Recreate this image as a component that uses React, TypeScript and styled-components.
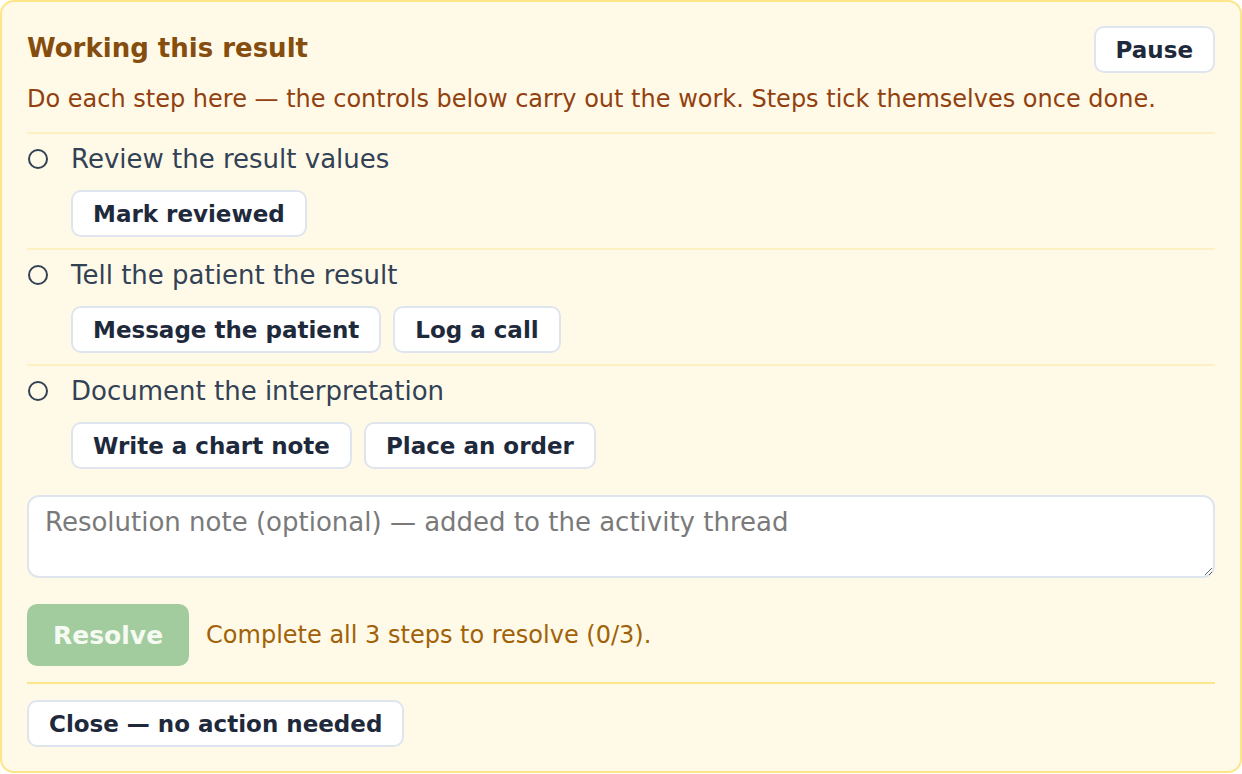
import { memo, useState } from 'react';
import styled, { createGlobalStyle } from 'styled-components';

const GlobalStyle = createGlobalStyle`
  body {
    margin: 0;
    background: #ffffff;
    font-family: 'DejaVu Sans', 'Liberation Sans', sans-serif;
  }
  * {
    box-sizing: border-box;
  }
`;

const SPanel = styled.section`
  background: #fffae8;
  border: 2px solid #fde68a;
  border-radius: 14px;
  padding: 22px 25px 24px;
  display: flex;
  flex-direction: column;
`;

const SHeader = styled.header`
  display: flex;
  justify-content: space-between;
  align-items: flex-start;
  margin-top: 2px;
`;

const STitle = styled.h2`
  margin: 5px 0 0;
  font-size: 26px;
  line-height: 34px;
  font-weight: 700;
  color: #854d0e;
`;

const SHint = styled.p`
  margin: 9px 0 16px;
  font-size: 24px;
  line-height: 34px;
  color: #92400e;
`;

const SButton = styled.button`
  height: 47px;
  padding: 0 20px;
  border: 2px solid #dfe5ef;
  border-radius: 10px;
  background: #ffffff;
  color: #1e293b;
  font-family: inherit;
  font-size: 23px;
  line-height: 28px;
  font-weight: 700;
  cursor: pointer;
`;

const SStepList = styled.ol`
  list-style: none;
  margin: 0;
  padding: 0;
`;

const SStep = styled.li`
  border-top: 2px solid #fdf1c4;
  padding: 8px 0 11px;
`;

const SStepLabel = styled.div`
  display: flex;
  align-items: center;
  gap: 23px;
  font-size: 26px;
  line-height: 34px;
  color: #334155;
`;

const SRadio = styled.span<{ $done: boolean }>`
  width: 20px;
  height: 20px;
  margin-left: 1px;
  border: 2px solid #334155;
  border-radius: 50%;
  background: ${({ $done }) => ($done ? '#334155' : 'transparent')};
  flex-shrink: 0;
`;

const SStepActions = styled.div`
  display: flex;
  gap: 12px;
  margin: 14px 0 0 44px;
`;

const SNote = styled.textarea`
  display: block;
  margin-top: 15px;
  height: 83px;
  width: 100%;
  padding: 10px 16px;
  border: 2px solid #dfe5ef;
  border-radius: 12px;
  background: #ffffff;
  font-family: inherit;
  font-size: 26px;
  line-height: 30px;
  color: #334155;
  resize: vertical;

  &::placeholder {
    color: #7a7a7a;
  }
`;

const SResolveRow = styled.div`
  display: flex;
  align-items: center;
  gap: 17px;
  margin-top: 26px;
  padding-bottom: 16px;
  border-bottom: 2px solid #fde68a;
`;

const SResolveButton = styled.button`
  height: 62px;
  padding: 0 26px;
  border: none;
  border-radius: 10px;
  background: #a3cc9e;
  color: #f5faf2;
  font-family: inherit;
  font-size: 25px;
  font-weight: 700;

  &:disabled {
    cursor: not-allowed;
  }
`;

const SResolveHint = styled.span`
  font-size: 24px;
  color: #a16207;
`;

const SFooter = styled.div`
  margin-top: 16px;
`;

const steps = [
  { label: 'Review the result values', actions: ['Mark reviewed'] },
  { label: 'Tell the patient the result', actions: ['Message the patient', 'Log a call'] },
  { label: 'Document the interpretation', actions: ['Write a chart note', 'Place an order'] },
];

const App = () => {
  const [note, setNote] = useState('');
  const done = 0;

  return (
    <>
      <GlobalStyle />
      <SPanel>
        <SHeader>
          <STitle>Working this result</STitle>
          <SButton type='button'>Pause</SButton>
        </SHeader>
        <SHint>Do each step here — the controls below carry out the work. Steps tick themselves once done.</SHint>

        <SStepList>
          {steps.map((step) => (
            <SStep key={step.label}>
              <SStepLabel>
                <SRadio $done={false} />
                {step.label}
              </SStepLabel>
              <SStepActions>
                {step.actions.map((action) => (
                  <SButton key={action} type='button'>
                    {action}
                  </SButton>
                ))}
              </SStepActions>
            </SStep>
          ))}
        </SStepList>

        <SNote
          value={note}
          onChange={(e) => setNote(e.target.value)}
          placeholder='Resolution note (optional) — added to the activity thread'
        />

        <SResolveRow>
          <SResolveButton type='button' disabled={done < steps.length}>
            Resolve
          </SResolveButton>
          <SResolveHint>
            Complete all {steps.length} steps to resolve ({done}/{steps.length}).
          </SResolveHint>
        </SResolveRow>

        <SFooter>
          <SButton type='button'>Close — no action needed</SButton>
        </SFooter>
      </SPanel>
    </>
  );
};

export default memo(App);
